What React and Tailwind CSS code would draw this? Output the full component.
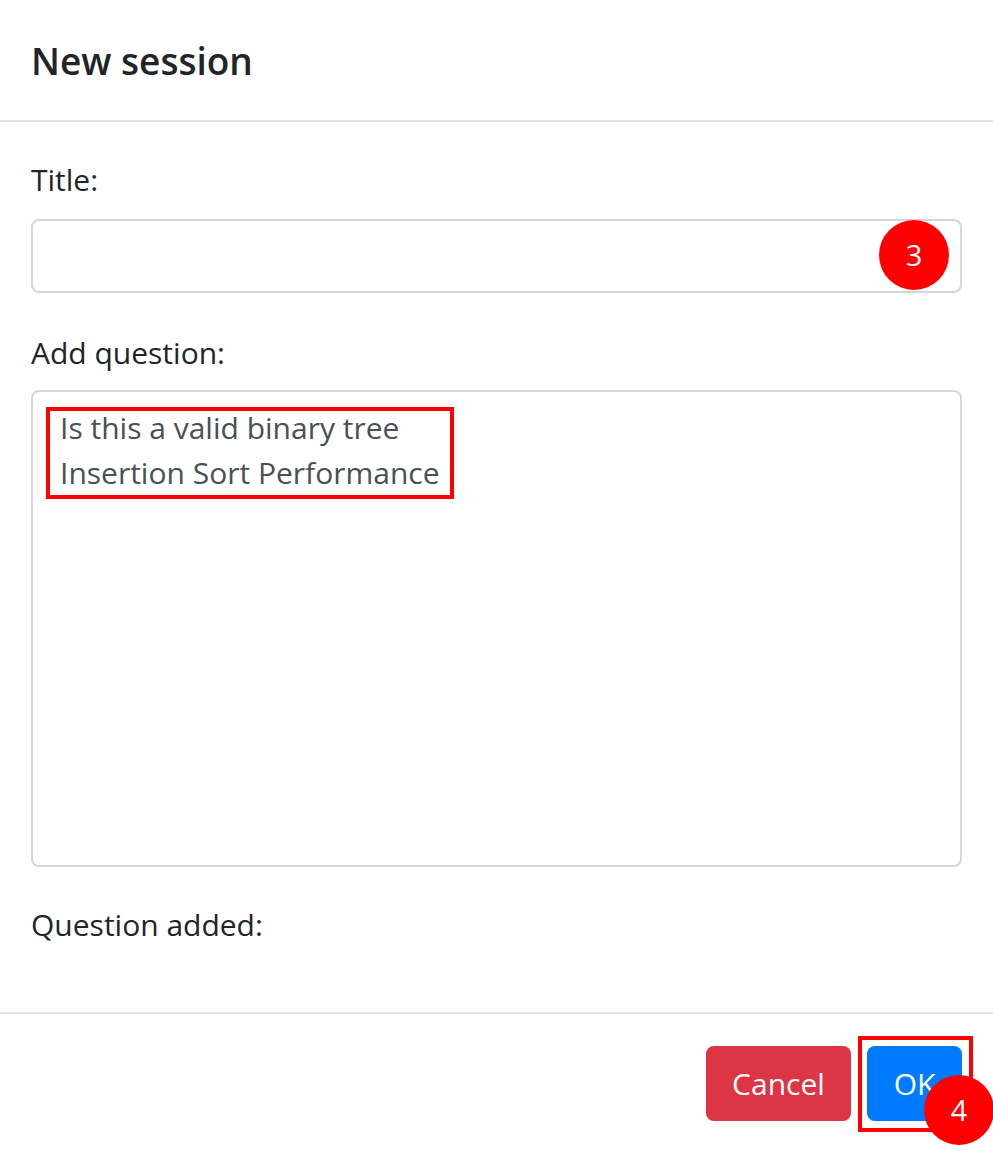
import React from "react";

export default function App() {
  const font = { fontFamily: '"Open Sans", "Noto Sans", sans-serif' };
  return (
    <div className="relative w-[993px] h-[1151px] bg-white overflow-hidden text-[#212529]" style={font}>
      <div className="h-[122px] border-b-2 border-[#dee2e6] px-[31px] flex items-center">
        <h5 className="text-[37px] font-semibold leading-none">New session</h5>
      </div>
      <div className="px-[31px] pt-[35px] pb-[64px] flex flex-col">
        <label className="h-[46px] leading-[46px] text-[30px]">Title:</label>
        <div className="mt-[16px] h-[74px] border-2 border-[#d3d7dc] rounded-[8px]"></div>
        <label className="mt-[37px] h-[46px] leading-[46px] text-[30px]">Add question:</label>
        <div className="mt-[14px] h-[477px] border-2 border-[#d3d7dc] rounded-[8px] pl-[27px] pt-[13px] text-[30px] leading-[45px] text-[#495057]">
          <div>Is this a valid binary tree</div>
          <div>Insertion Sort Performance</div>
        </div>
        <label className="mt-[35px] h-[46px] leading-[46px] text-[30px]">Question added:</label>
      </div>
      <div className="border-t-2 border-[#dee2e6] pt-[32px] pr-[31px] flex justify-end gap-[16px]">
        <button className="h-[75px] w-[145px] bg-[#dc3545] text-white text-[30px] rounded-[8px]">Cancel</button>
        <button className="h-[75px] w-[95px] bg-[#007bff] text-white text-[30px] rounded-[8px]">OK</button>
      </div>

      <div className="absolute left-[46px] top-[407px] w-[408px] h-[92px] border-[4px] border-[#ff0000]"></div>
      <div className="absolute left-[858px] top-[1036px] w-[115px] h-[96px] border-[4px] border-[#ff0000]"></div>
      <div className="absolute left-[879px] top-[220px] w-[70px] h-[70px] rounded-full bg-[#ff0000] text-white text-[29px] flex items-center justify-center">3</div>
      <div className="absolute left-[924px] top-[1075px] w-[70px] h-[70px] rounded-full bg-[#ff0000] text-white text-[29px] flex items-center justify-center">4</div>
    </div>
  );
}
